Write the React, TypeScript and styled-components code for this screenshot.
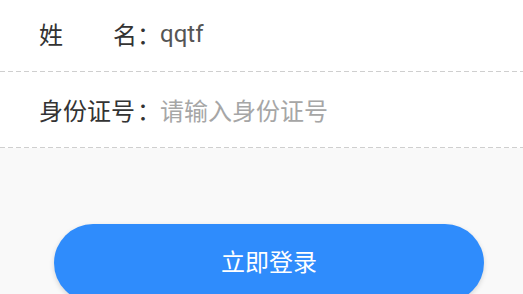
import React from "react";
import styled, { createGlobalStyle } from "styled-components";

const Global = createGlobalStyle`
  html, body {
    margin: 0;
    padding: 0;
    background: #f9f9f9;
    overflow: hidden;
  }
  body {
    font-family: "Noto Sans CJK SC", "Noto Sans", sans-serif;
  }
`;

const Page = styled.div`
  width: 523px;
  height: 294px;
  overflow: hidden;
  background: #f9f9f9;
`;

const Form = styled.div`
  background: #fff;
  margin-top: -4px;
`;

const Row = styled.div`
  display: flex;
  align-items: center;
  height: 76px;
  padding-left: 39px;
  background-image: linear-gradient(to right, #cfcfcf 5px, transparent 5px);
  background-size: 8px 1px;
  background-repeat: repeat-x;
  background-position: 0 100%;
`;

const Label = styled.span<{ $spread?: boolean }>`
  display: inline-flex;
  justify-content: ${(p) => (p.$spread ? "space-between" : "flex-start")};
  width: 98px;
  font-size: 24px;
  line-height: 1;
  color: #333;
`;

const Colon = styled.span`
  font-size: 24px;
  line-height: 1;
  color: #333;
  width: 23px;
`;

const Value = styled.span<{ $placeholder?: boolean }>`
  font-size: 24px;
  line-height: 1;
  color: ${(p) => (p.$placeholder ? "#a6a6a6" : "#555")};
  font-family: ${(p) =>
    p.$placeholder
      ? `"Noto Sans CJK SC", sans-serif`
      : `Roboto, "Noto Sans CJK SC", sans-serif`};
`;

const Actions = styled.div`
  display: flex;
  padding-top: 76px;
  padding-left: 54px;
`;

const Button = styled.button`
  width: 430px;
  height: 78px;
  border: none;
  border-radius: 39px;
  background: #2f8cfc;
  color: #fff;
  font-family: "Noto Sans CJK SC", sans-serif;
  font-size: 24px;
  line-height: 1;
  padding: 0 0 4px;
  box-shadow: 0 2px 5px rgba(0, 0, 0, 0.15);
`;

export default function App() {
  return (
    <Page>
      <Global />
      <Form>
        <Row>
          <Label $spread>
            <span>姓</span>
            <span>名</span>
          </Label>
          <Colon>：</Colon>
          <Value>qqtf</Value>
        </Row>
        <Row>
          <Label>身份证号</Label>
          <Colon>：</Colon>
          <Value $placeholder>请输入身份证号</Value>
        </Row>
      </Form>
      <Actions>
        <Button>立即登录</Button>
      </Actions>
    </Page>
  );
}
